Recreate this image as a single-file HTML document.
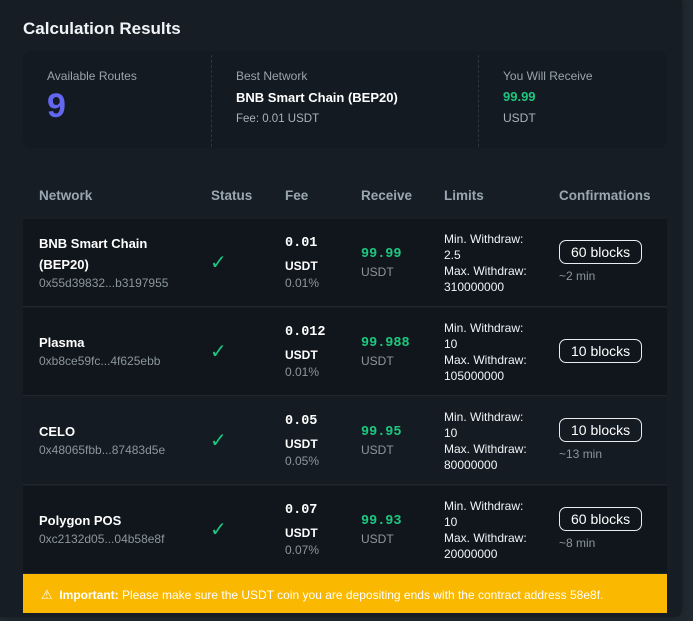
<!DOCTYPE html>
<html><head><meta charset="utf-8"><style>
*{margin:0;padding:0;box-sizing:border-box}
body{width:693px;height:621px;overflow:hidden;background:#222a31;font-family:"Liberation Sans",sans-serif;color:#e8edf2;position:relative}
.card{position:absolute;left:0;top:0;width:682px;height:617px;background:#161d25;border-radius:0 0 8px 0;box-shadow:0 0 10px rgba(0,0,0,.35)}
h1{position:absolute;left:23px;top:19px;font-size:17px;font-weight:bold;color:#f1f4f7}
.sum{position:absolute;left:23px;top:51px;width:644px;height:97px;background:#131a21;border-radius:8px}
.sum .c{position:absolute;top:18px}
.div{position:absolute;top:4px;height:92px;border-left:1px dashed #2c353e}
.lab{font-size:12px;color:#9aa4ad}
.th{position:absolute;top:188px;font-size:13.5px;font-weight:bold;color:#9aa6b0}
.row{position:absolute;left:23px;width:644px;height:88px;background:#10161c;border-bottom:1px solid #1e262e}
.row.l{background:#141b22}
.row div{position:absolute}
.nm{left:16px;font-size:13px;font-weight:bold;color:#fff;line-height:21px}
.ad{left:16px;font-size:12px;color:#8c969f}
.ck{left:187px;font-size:20px;color:#1ec77f;font-family:"DejaVu Sans",sans-serif;font-weight:normal}
.fee{left:262px;font-family:"Liberation Mono",monospace;font-weight:bold;font-size:13.5px;color:#fff}
.us{left:262px;font-weight:bold;font-size:12px;color:#fff}
.pc{left:262px;font-size:12px;color:#8c969f}
.rv{left:338px;font-family:"Liberation Mono",monospace;font-weight:bold;font-size:13.5px;color:#1ec77f}
.ru{left:338px;font-size:12px;color:#8c969f}
.lim{left:421px;font-size:12px;line-height:16px;color:#f1f4f7}
.bk{left:536px;border:1px solid #e8edf2;border-radius:7px;padding:1px 11px;font-size:14px;color:#fff;height:24px;line-height:20px}
.tm{left:536px;font-size:12px;color:#8c969f}
.ban{position:absolute;left:23px;top:574px;width:644px;height:39px;background:#fbb800;font-size:12px;color:#fff;padding-left:18px;line-height:41px}
</style></head><body><div class="card">
<h1>Calculation Results</h1>
<div class="sum">
<div class="c" style="left:24px"><div class="lab">Available Routes</div><div style="font-size:34px;font-weight:bold;color:#6366f1;margin-top:4px">9</div></div>
<div class="div" style="left:188px"></div>
<div class="c" style="left:213px"><div class="lab">Best Network</div><div style="font-size:13px;font-weight:bold;color:#fff;margin-top:7px">BNB Smart Chain (BEP20)</div><div style="font-size:11.5px;color:#aab3bb;margin-top:8px">Fee: 0.01 USDT</div></div>
<div class="div" style="left:455px"></div>
<div class="c" style="left:480px"><div class="lab">You Will Receive</div><div style="font-size:13px;font-weight:bold;color:#1ec77f;margin-top:6px">99.99</div><div style="font-size:12px;color:#aab3bb;margin-top:7px">USDT</div></div>
</div>
<div class="th" style="left:39px">Network</div><div class="th" style="left:211px">Status</div><div class="th" style="left:285px">Fee</div><div class="th" style="left:361px">Receive</div><div class="th" style="left:444px">Limits</div><div class="th" style="left:559px">Confirmations</div>

<div class="row" style="top:219px">
<div class="nm" style="top:14px">BNB Smart Chain<br>(BEP20)</div><div class="ad" style="top:57px">0x55d39832...b3197955</div>
<div class="ck" style="top:31px">✓</div>
<div class="fee" style="top:17px">0.01</div><div class="us" style="top:40px">USDT</div><div class="pc" style="top:57px">0.01%</div>
<div class="rv" style="top:28px">99.99</div><div class="ru" style="top:46px">USDT</div>
<div class="lim" style="top:12px">Min. Withdraw:<br>2.5<br>Max. Withdraw:<br>310000000</div>
<div class="bk" style="top:21px">60 blocks</div><div class="tm" style="top:50px">~2 min</div>
</div>
<div class="row" style="top:308px">
<div class="nm" style="top:24px">Plasma</div><div class="ad" style="top:46px">0xb8ce59fc...4f625ebb</div>
<div class="ck" style="top:31px">✓</div>
<div class="fee" style="top:17px">0.012</div><div class="us" style="top:40px">USDT</div><div class="pc" style="top:57px">0.01%</div>
<div class="rv" style="top:28px">99.988</div><div class="ru" style="top:46px">USDT</div>
<div class="lim" style="top:12px">Min. Withdraw:<br>10<br>Max. Withdraw:<br>105000000</div>
<div class="bk" style="top:31px">10 blocks</div>
</div>
<div class="row l" style="top:397px">
<div class="nm" style="top:24px">CELO</div><div class="ad" style="top:46px">0x48065fbb...87483d5e</div>
<div class="ck" style="top:31px">✓</div>
<div class="fee" style="top:17px">0.05</div><div class="us" style="top:40px">USDT</div><div class="pc" style="top:57px">0.05%</div>
<div class="rv" style="top:28px">99.95</div><div class="ru" style="top:46px">USDT</div>
<div class="lim" style="top:12px">Min. Withdraw:<br>10<br>Max. Withdraw:<br>80000000</div>
<div class="bk" style="top:21px">10 blocks</div><div class="tm" style="top:50px">~13 min</div>
</div>
<div class="row" style="top:486px">
<div class="nm" style="top:24px">Polygon POS</div><div class="ad" style="top:46px">0xc2132d05...04b58e8f</div>
<div class="ck" style="top:31px">✓</div>
<div class="fee" style="top:17px">0.07</div><div class="us" style="top:40px">USDT</div><div class="pc" style="top:57px">0.07%</div>
<div class="rv" style="top:28px">99.93</div><div class="ru" style="top:46px">USDT</div>
<div class="lim" style="top:12px">Min. Withdraw:<br>10<br>Max. Withdraw:<br>20000000</div>
<div class="bk" style="top:21px">60 blocks</div><div class="tm" style="top:50px">~8 min</div>
</div>
<div class="ban"><span style="font-size:13px">⚠</span>&nbsp; <b>Important:</b> Please make sure the USDT coin you are depositing ends with the contract address 58e8f.</div>
</div></body></html>
